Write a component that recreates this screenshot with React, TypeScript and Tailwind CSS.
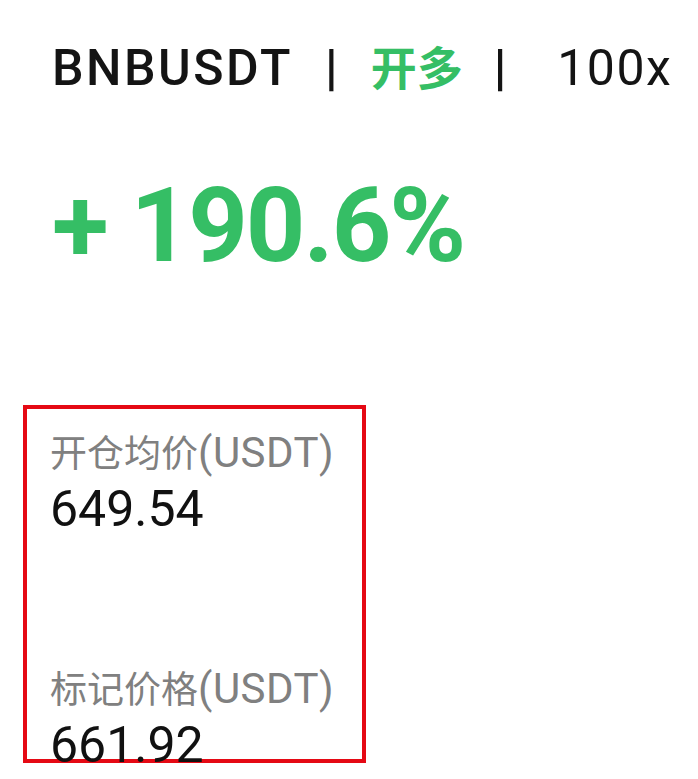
import React from "react";

const latin = "font-['Roboto','Noto_Sans_CJK_SC',sans-serif]";

const Stat: React.FC<{ label: string; unit: string; value: string; className?: string }> = ({
  label,
  unit,
  value,
  className = "",
}) => (
  <div className={className}>
    <div className="text-[37px] leading-[40px] text-[#808080] whitespace-nowrap">
      {label}
      <span className="text-[42px] leading-[40px] tracking-[0.5px]">{unit}</span>
    </div>
    <div className="text-[50px] leading-[50px] text-[#111111] mt-[9px]">
      {value}
    </div>
  </div>
);

export default function App() {
  return (
    <div className={`${latin} bg-white w-[698px] h-[779px] overflow-hidden px-[23px] pt-[43px]`}>
      {/* header line */}
      <div className="flex items-baseline pl-[29px] text-[50px] leading-[50px] font-medium text-[#141414] whitespace-nowrap">
        <span className="tracking-[2.5px]">BNBUSDT</span>
        <span className="ml-[32px] font-bold">|</span>
        <span className="ml-[33px] text-[46px] font-bold text-[#35be65]">开多</span>
        <span className="ml-[31px] font-bold">|</span>
        <span className="ml-[51px] font-normal tracking-[1.5px]">100x</span>
      </div>

      {/* profit */}
      <div className="mt-[79px] pl-[29px] text-[104px] leading-[106px] font-bold tracking-[-2px] text-[#35be65] whitespace-nowrap">
        + 190.6%
      </div>

      {/* box */}
      <div className="mt-[126px] w-[343px] h-[358px] border-4 border-[#e50914] pl-[23px] pt-[24px]">
        <Stat label="开仓均价" unit="(USDT)" value="649.54" />
        <Stat label="标记价格" unit="(USDT)" value="661.92" className="mt-[135px]" />
      </div>
    </div>
  );
}
